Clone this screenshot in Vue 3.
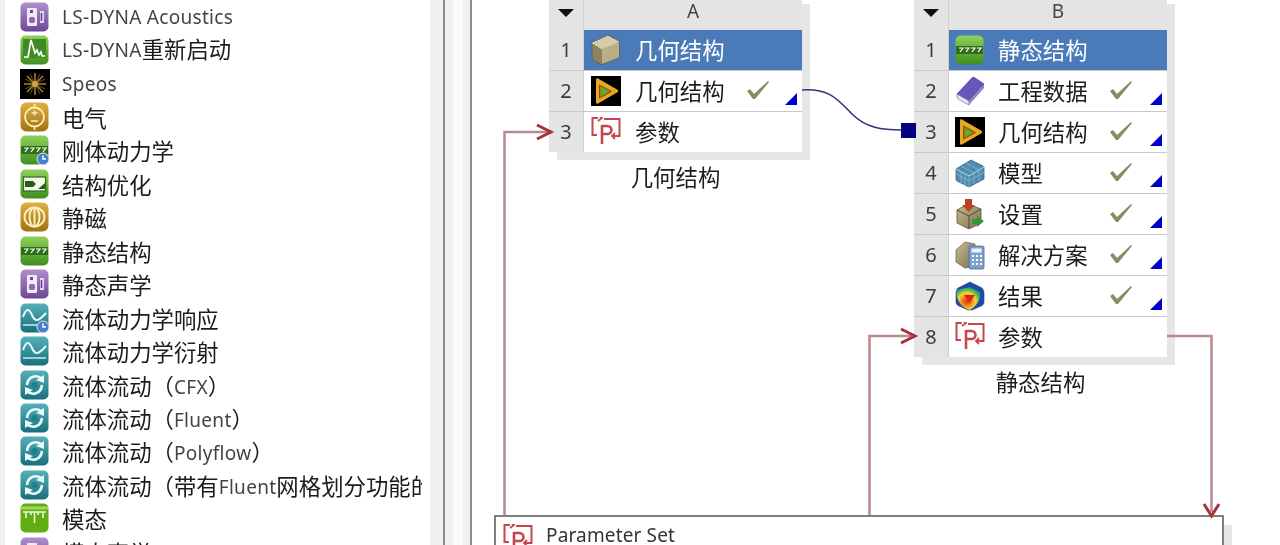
<script setup>
const sidebar = [
  { icon: 'acoustic', label: 'LS-DYNA Acoustics' },
  { icon: 'restart', label: 'LS-DYNA重新启动' },
  { icon: 'speos', label: 'Speos' },
  { icon: 'electric', label: '电气' },
  { icon: 'rigid', label: '刚体动力学' },
  { icon: 'topo', label: '结构优化' },
  { icon: 'magnet', label: '静磁' },
  { icon: 'static', label: '静态结构' },
  { icon: 'acoustic', label: '静态声学' },
  { icon: 'fluidresp', label: '流体动力学响应' },
  { icon: 'fluidwave', label: '流体动力学衍射' },
  { icon: 'flow', label: '流体流动（CFX）' },
  { icon: 'flow', label: '流体流动（Fluent）' },
  { icon: 'flow', label: '流体流动（Polyflow）' },
  { icon: 'flow', label: '流体流动（带有Fluent网格划分功能的）' },
  { icon: 'modal', label: '模态' },
  { icon: 'acoustic', label: '模态声学' }
]

const systems = [
  {
    id: 'A',
    left: 549,
    title: '几何结构',
    rows: [
      { icon: 'box', label: '几何结构', head: true },
      { icon: 'play', label: '几何结构', done: true },
      { icon: 'param', label: '参数' }
    ]
  },
  {
    id: 'B',
    left: 914,
    title: '静态结构',
    rows: [
      { icon: 'static', label: '静态结构', head: true },
      { icon: 'book', label: '工程数据', done: true },
      { icon: 'play', label: '几何结构', done: true },
      { icon: 'mesh', label: '模型', done: true },
      { icon: 'setup', label: '设置', done: true },
      { icon: 'solve', label: '解决方案', done: true },
      { icon: 'result', label: '结果', done: true },
      { icon: 'param', label: '参数' }
    ]
  }
]

// 把拉丁字符单独包起来，字体和颜色不一样
function parts(text) {
  return text.split(/([A-Za-z -]+)/).filter(Boolean).map((t) => ({
    t,
    latin: /^[A-Za-z -]+$/.test(t)
  }))
}
</script>

<template>
  <div class="page">
    <svg class="defs" width="0" height="0">
      <defs>
        <linearGradient id="gGreen" x1="0" y1="0" x2="0" y2="1">
          <stop offset="0" stop-color="#8fd05a" /><stop offset="1" stop-color="#3f8f1e" />
        </linearGradient>
        <linearGradient id="gPurple" x1="0" y1="0" x2="0" y2="1">
          <stop offset="0" stop-color="#b08fce" /><stop offset="1" stop-color="#6d4596" />
        </linearGradient>
        <linearGradient id="gGold" x1="0" y1="0" x2="0" y2="1">
          <stop offset="0" stop-color="#e0b040" /><stop offset="1" stop-color="#a07214" />
        </linearGradient>
        <linearGradient id="gTeal" x1="0" y1="0" x2="0" y2="1">
          <stop offset="0" stop-color="#56b0b8" /><stop offset="1" stop-color="#17707c" />
        </linearGradient>
        <linearGradient id="gBox" x1="0" y1="0" x2="1" y2="1">
          <stop offset="0" stop-color="#c8bc90" /><stop offset="1" stop-color="#7a6e50" />
        </linearGradient>
        <radialGradient id="gHeat" cx="0.45" cy="0.62" r="0.6">
          <stop offset="0" stop-color="#e02c14" /><stop offset="0.35" stop-color="#f08a20" />
          <stop offset="0.6" stop-color="#f0d830" /><stop offset="0.85" stop-color="#50b858" />
          <stop offset="1" stop-color="#2f8f80" />
        </radialGradient>

        <symbol id="clock" viewBox="0 0 30 30">
          <circle cx="23" cy="24" r="6" fill="#4d7fd0" stroke="#dfe8f6" stroke-width="1" />
          <path d="M23 20.500V24h3" fill="none" stroke="#fff" stroke-width="1.400" />
        </symbol>

        <symbol id="acoustic" viewBox="0 0 30 30">
          <rect x="0.500" y="0.500" width="28" height="29" rx="5" fill="url(#gPurple)" />
          <rect x="7" y="6" width="10" height="18" rx="1" fill="#f0e8f4" />
          <rect x="10" y="8" width="3" height="3" fill="#6d4596" />
          <rect x="9" y="15" width="6" height="6" rx="2" fill="#8a6aa8" />
          <path d="M20 9h4v12h-4z" fill="#e4d8ee" />
          <path d="M21.500 11v8" stroke="#6d4596" stroke-width="1.600" />
        </symbol>
        <symbol id="restart" viewBox="0 0 30 30">
          <rect x="0.500" y="0.500" width="28" height="29" rx="5" fill="url(#gGreen)" />
          <rect x="3" y="4" width="23" height="19" fill="#3f8a22" />
          <path d="M4 22h4l3-17 4 13 2-3 2 5 2-3 1 4h3" fill="none" stroke="#fff" stroke-width="1.700" />
        </symbol>
        <symbol id="speos" viewBox="0 0 30 30">
          <rect width="30" height="30" fill="#000" />
          <path d="M15 4v22M4 15h22M7 7l16 16M23 7L7 23" stroke="#a88032" stroke-width="1.500" />
          <path d="M10 5l10 20M20 5L10 25M5 10l20 10M25 10L5 20" stroke="#6e5420" stroke-width="1" />
          <circle cx="15" cy="15" r="3" fill="#c8a858" />
        </symbol>
        <symbol id="electric" viewBox="0 0 30 30">
          <rect x="0.500" y="0.500" width="28" height="29" rx="6" fill="url(#gGold)" />
          <circle cx="14.500" cy="15" r="9.500" fill="none" stroke="#fbeeb8" stroke-width="1.800" />
          <path d="M14.500 2v4M14.500 24v4M11.500 11h6M14.500 8.500v5M11 19h7" stroke="#fbeeb8" stroke-width="1.500" />
        </symbol>
        <symbol id="static" viewBox="0 0 30 30">
          <rect x="0.500" y="0.500" width="28" height="29" rx="5" fill="url(#gGreen)" />
          <rect x="1" y="11" width="27" height="8" fill="#2f6d18" />
          <path d="M5 17l3-4H4M11 17l3-4h-4M17 17l3-4h-4M23 17l3-4h-4" fill="none" stroke="#fff" stroke-width="1.200" />
        </symbol>
        <symbol id="rigid" viewBox="0 0 30 30">
          <use href="#static" width="30" height="30" />
          <use href="#clock" width="30" height="30" />
        </symbol>
        <symbol id="topo" viewBox="0 0 30 30">
          <rect x="0.500" y="0.500" width="28" height="29" rx="5" fill="url(#gGreen)" />
          <rect x="3.500" y="8" width="22" height="14" fill="#f4f8ee" stroke="#2f6d18" stroke-width="1.200" />
          <path d="M5 12h8l3 3-3 3H5zM18 20l7-6v6z" fill="#2c5a18" />
        </symbol>
        <symbol id="magnet" viewBox="0 0 30 30">
          <rect x="0.500" y="0.500" width="28" height="29" rx="6" fill="url(#gGold)" />
          <g fill="none" stroke="#fbf0c4" stroke-width="1.900">
            <ellipse cx="14.500" cy="15" rx="10" ry="9.500" />
            <ellipse cx="14.500" cy="15" rx="5" ry="9.500" />
            <path d="M14.500 5.500v19" />
          </g>
        </symbol>
        <symbol id="fluidwave" viewBox="0 0 30 30">
          <rect x="0.500" y="0.500" width="28" height="29" rx="5" fill="url(#gTeal)" />
          <path d="M3 14c3-9 6-9 9-2s6 7 14-2" fill="none" stroke="#e8fafa" stroke-width="2" />
          <path d="M3 22h23" stroke="#bfe8ea" stroke-width="1.600" />
        </symbol>
        <symbol id="fluidresp" viewBox="0 0 30 30">
          <use href="#fluidwave" width="30" height="30" />
          <use href="#clock" width="30" height="30" />
        </symbol>
        <symbol id="flow" viewBox="0 0 30 30">
          <rect x="0.500" y="0.500" width="28" height="29" rx="5" fill="url(#gTeal)" />
          <path d="M22 9c-5-5-14-3-15 6M7 21c5 5 14 3 15-6" fill="none" stroke="#e8fafa" stroke-width="2.600" />
          <path d="M16 10l8-5v8zM13 20l-8 5v-8z" fill="#e8fafa" />
          <circle cx="14.500" cy="15" r="3" fill="#1d7f8a" />
        </symbol>
        <symbol id="modal" viewBox="0 0 30 30">
          <rect x="0.500" y="0.500" width="28" height="29" rx="5" fill="#62ad14" />
          <path d="M1 5h27" stroke="#a0d858" stroke-width="3" />
          <path d="M6 9v6M11 9v3M14.500 9v11M18 9v3M23 9v6M3 9h23" stroke="#f0fae0" stroke-width="1.500" />
        </symbol>

        <symbol id="box" viewBox="0 0 30 30">
          <path d="M1 9c0-1 .5-1.500 1.500-2L16 1c1-.5 2-.5 3 0l8 5c1 .5 1.500 1 1.500 2v13c0 1-.5 1.500-1.500 2l-15 6c-1 .5-2 .5-3 0l-5-3c-2-1-3-2-3-4z" fill="#8a8460" stroke="#5e5a48" stroke-width="0.800" />
          <path d="M1.500 8L17 1l11 6-17 7z" fill="#d4cca8" stroke="#f6f2e0" stroke-width="1" stroke-dasharray="1.500 1.500" />
          <path d="M11 14l17-7v14c0 1-.5 1.500-1.500 2L11 29z" fill="#b8ae88" />
        </symbol>
        <symbol id="play" viewBox="0 0 30 30">
          <rect width="30" height="31" fill="#000" />
          <path d="M5 3.500c0-1 1-1.500 2-1l19 11c1.500 1 1.500 2 0 3L7 27.500c-1 .5-2 0-2-1z" fill="#e8a820" />
          <path d="M8.500 9l12 6.500-12 6.500z" fill="#b07818" stroke="#7a4e10" stroke-width="1" />
          <path d="M11 12l6 3.500L11 19z" fill="#28c83c" />
        </symbol>
        <symbol id="param" viewBox="0 2 30 30">
          <g fill="none" stroke="#c4464e" stroke-width="2">
            <path d="M7 3H1.500v17H6" />
            <path d="M13 4h15.500v17H22" />
            <path d="M7 0l4 3-4 3" stroke-width="1.800" />
            <path d="M24 18l-3 3 3 3" stroke-width="1.800" />
            <path d="M11 11h5.500a3.500 3.500 0 0 1 0 8H11M11 10v19" stroke-width="2.600" />
          </g>
        </symbol>
        <symbol id="book" viewBox="0 0 30 30">
          <path d="M2 18L17 2c1-1 2-1 3 0l9 6-15 17z" fill="#6658b8" stroke="#463c90" stroke-width="0.800" />
          <path d="M2 18l12 7v4L3 23c-1-1-1-3-1-5z" fill="#e8e8f4" stroke="#7c78b0" stroke-width="0.800" />
          <path d="M14 25L29 8v4L14 29z" fill="#8c88c8" />
        </symbol>
        <symbol id="mesh" viewBox="0 0 30 30">
          <path d="M1 11L16 2l12 6c1 .5 1 1 1 2v11l-15 8-12-6c-1-.5-1-1-1-2z" fill="#4f8cae" stroke="#2f6080" stroke-width="0.800" />
          <path d="M1 11l13 7 15-9" fill="none" stroke="#b4d8e8" stroke-width="1" />
          <path d="M14 18v11M6 8l13 7M11 5l13 7M6 14v11M10 16v11M19 15v11M24 12v11M1 16l13 7 15-9" fill="none" stroke="#80b4cc" stroke-width="0.900" />
        </symbol>
        <symbol id="setup" viewBox="0 0 30 30">
          <path d="M2 11l11-6 13 5v14l-12 6-12-6z" fill="url(#gBox)" stroke="#5a5038" stroke-width="0.800" />
          <path d="M2 11l12 6 12-7M14 17v13" fill="none" stroke="#4c4430" stroke-width="0.900" />
          <path d="M10 0h7v6h3l-6.500 7L7 6h3z" fill="#b84424" />
          <path d="M17 20h5v-3l7 5-7 6v-3h-5z" fill="#3a9436" />
        </symbol>
        <symbol id="solve" viewBox="0 0 30 30">
          <path d="M1 10l9-8 10 2v22l-10 2-9-6z" fill="url(#gBox)" stroke="#6e6a56" stroke-width="0.800" />
          <rect x="14" y="6" width="15" height="23" rx="1.500" fill="#7da0d0" stroke="#46689c" stroke-width="0.800" />
          <rect x="16.500" y="8.500" width="10" height="4" fill="#eef3fa" />
          <path d="M17 16h2M21 16h2M25 16h2M17 20h2M21 20h2M25 20h2M17 24h2M21 24h2M25 24h2" stroke="#fff" stroke-width="2" />
        </symbol>
        <symbol id="result" viewBox="0 0 30 30">
          <path d="M15 1l12 6c1 1 2 3 2 5v9c0 2-1 3-3 4l-9 4h-4l-9-4c-2-1-3-2-3-4v-9c0-2 1-4 2-5z" fill="#2048a8" stroke="#1c3c90" stroke-width="0.600" />
          <path d="M1 9l14-3 10 5c1 6-2 13-10 18C6 27 1 18 1 9z" fill="url(#gHeat)" />
          <path d="M9 14h11l-5.500 8z" fill="#d82810" />
        </symbol>
      </defs>
    </svg>

    <aside class="sidebar">
      <ul class="tool-list">
        <li v-for="(item, i) in sidebar" :key="i" class="tool-row">
          <svg class="tool-icon"><use :href="'#' + item.icon" /></svg>
          <span class="tool-label">
            <span v-for="(p, j) in parts(item.label)" :key="j" :class="{ latin: p.latin }">{{ p.t }}</span>
          </span>
        </li>
      </ul>
    </aside>

    <div class="splitter">
      <div class="split-a"></div>
      <div class="split-b"></div>
      <div class="split-c"></div>
    </div>

    <main class="canvas">
      <section
        v-for="sys in systems"
        :key="sys.id"
        class="system"
        :class="'system-' + sys.id"
        :style="{ left: sys.left - 472 + 'px' }"
      >
        <div class="table">
          <div class="row head-row">
            <div class="num"><span class="caret"></span></div>
            <div class="col-name">{{ sys.id }}</div>
          </div>
          <div v-for="(row, i) in sys.rows" :key="i" class="row">
            <div class="num">{{ i + 1 }}</div>
            <div class="cell" :class="{ selected: row.head }">
              <svg class="cell-icon"><use :href="'#' + row.icon" /></svg>
              <span class="cell-label">{{ row.label }}</span>
              <template v-if="row.done">
                <svg class="check" viewBox="0 0 24 20">
                  <path d="M1 11l3-2 4 5L22 1l1 1L9 19h-2z" fill="#7f9160" />
                </svg>
                <svg class="corner" viewBox="0 0 12 12">
                  <path d="M12 0v12H0z" fill="#0000c8" />
                </svg>
              </template>
            </div>
          </div>
        </div>
        <div class="system-title">{{ sys.title }}</div>
      </section>

      <section class="param-set">
        <svg class="set-icon"><use href="#param" /></svg>
        <span class="set-label">Parameter Set</span>
      </section>

      <svg class="links" width="808" height="545" viewBox="472 0 808 545">
        <path d="M802 90c28-2 36 10 50 24s30 16 50 16" fill="none" stroke="#34347e" stroke-width="1.600" />
        <rect x="901" y="123" width="15" height="15" fill="#000080" />
        <g fill="none" stroke="#b78a8d" stroke-width="2.500">
          <path d="M504.500 515V132H548" />
          <path d="M869.500 515V336H913" />
          <path d="M1167 336H1211.500V512" />
        </g>
        <g fill="none" stroke="#a5333b" stroke-width="3">
          <path d="M537 125l14 7-14 7" />
          <path d="M901 329l14 7-14 7" />
          <path d="M1204 504l7.500 12 7.500-12" />
        </g>
      </svg>
    </main>
  </div>
</template>

<style>
html,
body {
  margin: 0;
  background: #fff;
}
</style>

<style scoped>
.page {
  display: flex;
  width: 1280px;
  height: 545px;
  overflow: hidden;
  background: #fff;
  font-family: "Noto Sans CJK SC", "Noto Sans", sans-serif;
  color: #1c1c1c;
  filter: blur(0.35px);
}

.defs {
  position: absolute;
}

.sidebar {
  flex: none;
  box-sizing: border-box;
  width: 443px;
  padding-left: 5px;
  padding-right: 13px;
  background: #f0f0f0;
}

.tool-list {
  height: 545px;
  margin: 0;
  padding: 0 0 0 15px;
  list-style: none;
  background: #fff;
  overflow: hidden;
}

.tool-row {
  display: flex;
  align-items: center;
  height: 33.45px;
  overflow: hidden;
}

.tool-icon {
  flex: none;
  width: 30px;
  height: 30px;
}

.tool-label {
  flex: none;
  width: 360px;
  margin-left: 12px;
  overflow: hidden;
  white-space: nowrap;
  font-size: 22.4px;
  line-height: 30px;
}

/* 前三行基线偏高 */
.tool-row:nth-child(-n + 3) .tool-label {
  margin-top: -4px;
}

.latin {
  position: relative;
  top: -1px;
  font-family: "Noto Sans", sans-serif;
  font-size: 19px;
  line-height: 1;
  letter-spacing: 0.3px;
  color: #444;
}

.splitter {
  flex: none;
  display: flex;
  width: 29px;
}

.split-a {
  width: 2px;
  background: #8c8c8c;
}

.split-b {
  flex: 1;
  background: linear-gradient(90deg, #f0f0f0 0 8px, #fafafa 8px 18px, #f0f0f0 18px);
}

.split-c {
  width: 2px;
  background: #8c8c8c;
}

.canvas {
  position: relative;
  flex: 1;
}

.links {
  position: absolute;
  left: 0;
  top: 0;
}

.system {
  position: absolute;
  top: -4px;
  width: 253px;
}

.table {
  box-shadow: 8px 8px 0 #e6e6e6;
}

.row {
  display: flex;
  height: 41px;
  box-sizing: border-box;
  border-bottom: 1px solid #c9c9c9;
  background: #e4e4e4;
}

.row:last-child {
  border-bottom: 0;
  height: 40.5px;
}

.head-row {
  height: 33.5px;
  padding-top: 4px;
  border-bottom: 0;
}

.num {
  flex: none;
  display: flex;
  align-items: center;
  justify-content: center;
  width: 34px;
  border-right: 1px solid #cfcfcf;
  font-family: "Noto Sans", sans-serif;
  font-size: 20px;
  color: #3c3c3c;
}

.caret {
  width: 0;
  height: 0;
  margin-top: -4px;
  border-left: 8.500px solid transparent;
  border-right: 8.500px solid transparent;
  border-top: 8px solid #111;
}

.col-name {
  flex: 1;
  text-align: center;
  font-family: "Noto Sans", sans-serif;
  font-size: 19px;
  line-height: 22px;
  color: #444;
}

.cell {
  position: relative;
  flex: 1;
  display: flex;
  align-items: center;
  padding-left: 7px;
  background: #fff;
}

.system-B .cell {
  padding-left: 6px;
}

.system-B .cell-label {
  margin-left: 13px;
}

.system-B .check {
  left: 160px;
}

.cell.selected {
  background: #4a7ab8;
  color: #fff;
}

.cell-icon {
  flex: none;
  width: 30px;
  height: 30px;
}

.cell-label {
  margin-left: 14px;
  margin-top: -2px;
  font-size: 22.4px;
  line-height: 30px;
}

.check {
  position: absolute;
  left: 162px;
  top: 9px;
  width: 24px;
  height: 20px;
}

.corner {
  position: absolute;
  left: 201px;
  top: 22px;
  width: 12px;
  height: 12px;
}

.system-title {
  margin-top: 9px;
  text-align: center;
  font-size: 22.4px;
  line-height: 30px;
}

.param-set {
  position: absolute;
  left: 22px;
  top: 515px;
  box-sizing: border-box;
  display: flex;
  align-items: flex-start;
  width: 730px;
  height: 60px;
  padding: 7px 0 0 7px;
  border: 2px solid #7f7f7f;
  background: #fff;
  box-shadow: 8px 10px 0 #e6e6e6;
}

.set-icon {
  flex: none;
  width: 30px;
  height: 30px;
}

.set-label {
  margin-left: 13px;
  margin-top: -2px;
  font-family: "Noto Sans", sans-serif;
  font-size: 19px;
  line-height: 26px;
  letter-spacing: 0.15px;
  color: #333;
}
</style>
